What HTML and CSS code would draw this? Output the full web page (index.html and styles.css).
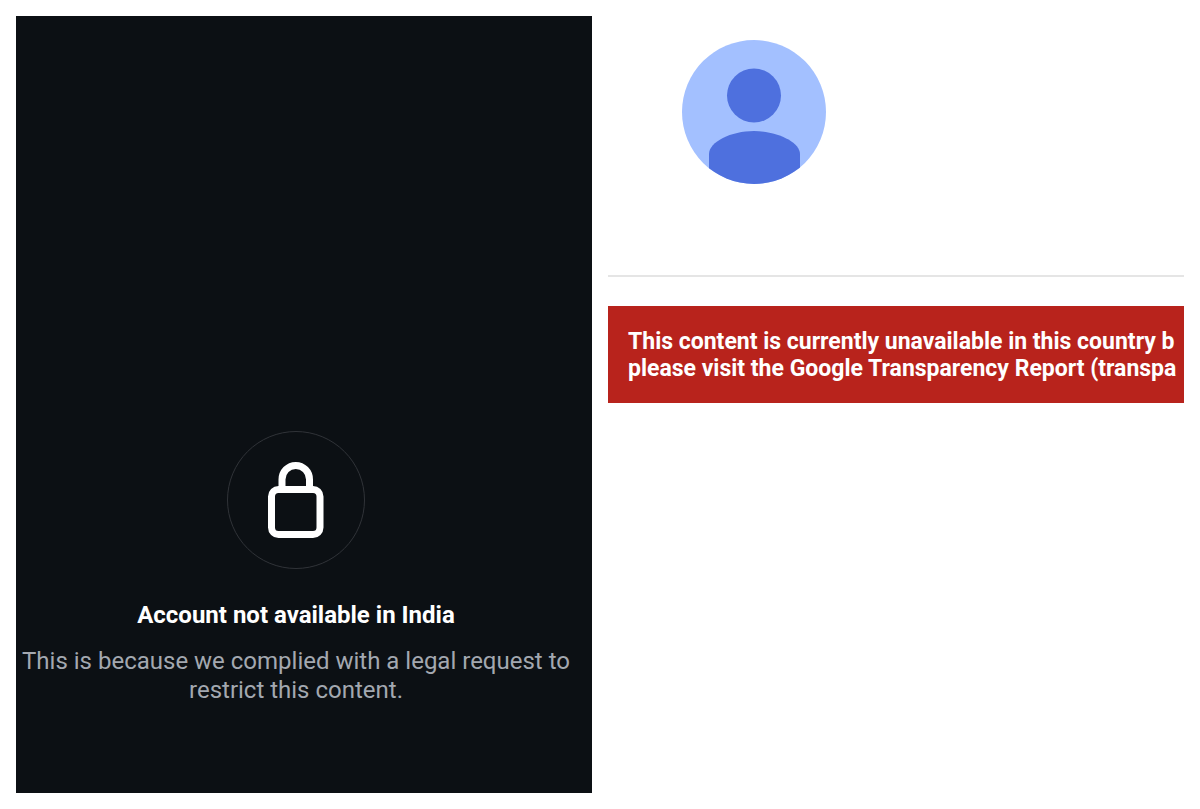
FILE: index.html
```
<!DOCTYPE html>
<html lang="en">
<head>
    <meta charset="utf-8">
    <title>Account not available in India</title>
    <link rel="stylesheet" href="styles.css">
</head>
<body>
    <main class="panels">
        <section class="panel restricted">
            <div class="lock-circle">
                <svg width="58" height="78" viewBox="0 0 58 78" fill="none" stroke="#fff" stroke-width="7" aria-hidden="true">
                    <path d="M15 28V18.5a13.7 14 0 0 1 27.5 0V28"/>
                    <rect x="4.5" y="28.5" width="48.5" height="45" rx="7"/>
                </svg>
            </div>
            <h1>Account not available in India</h1>
            <p>This is because we complied with a legal request to restrict this content.</p>
        </section>
        <section class="panel channel">
            <header class="channel-header">
                <svg class="avatar" viewBox="0 0 144 144" role="img" aria-label="Profile picture">
                    <clipPath id="round"><circle cx="72" cy="72" r="72"/></clipPath>
                    <circle cx="72" cy="72" r="72" fill="#a3c0ff"/>
                    <g fill="#4e70de" clip-path="url(#round)">
                        <circle cx="72" cy="55.5" r="27"/>
                        <path d="M27 144V114C27 102 49 91 72 91S118 102 118 114V144Z"/>
                    </g>
                </svg>
            </header>
            <div class="notice">
                This content is currently unavailable in this country b<br>
                please visit the Google Transparency Report (transpa
            </div>
        </section>
    </main>
</body>
</html>
```
FILE: styles.css
```
* {
    box-sizing: border-box;
}

body {
    margin: 0;
    font-family: Roboto, Arial, sans-serif;
    background: #fff;
}

.panels {
    display: grid;
    grid-template-columns: repeat(2, minmax(0, 1fr));
    gap: 16px;
    min-height: 100vh;
    padding: 16px;
}

.restricted {
    display: flex;
    flex-direction: column;
    align-items: center;
    justify-content: flex-end;
    padding: 0 16px 88px 0;
    background: #0c1014;
    text-align: center;
}

.lock-circle {
    display: flex;
    align-items: center;
    justify-content: center;
    width: 138px;
    height: 138px;
    border: 1px solid #303338;
    border-radius: 50%;
}

h1 {
    margin: 32px 0 18px;
    font-size: 24px;
    line-height: 28px;
    font-weight: 700;
    color: #fff;
}

.restricted p {
    margin: 0;
    font-size: 24px;
    line-height: 29px;
    color: #a3a8b0;
}

.channel {
    overflow: hidden;
}

.channel-header {
    height: 261px;
    padding: 24px 74px;
    border-bottom: 2px solid #e5e5e5;
}

.avatar {
    display: block;
    width: 144px;
    height: 144px;
}

.notice {
    margin-top: 29px;
    padding: 22px 20px 21px;
    background: #b8231c;
    font-size: 23px;
    line-height: 27px;
    font-weight: 700;
    color: #fff;
    white-space: nowrap;
}
```
